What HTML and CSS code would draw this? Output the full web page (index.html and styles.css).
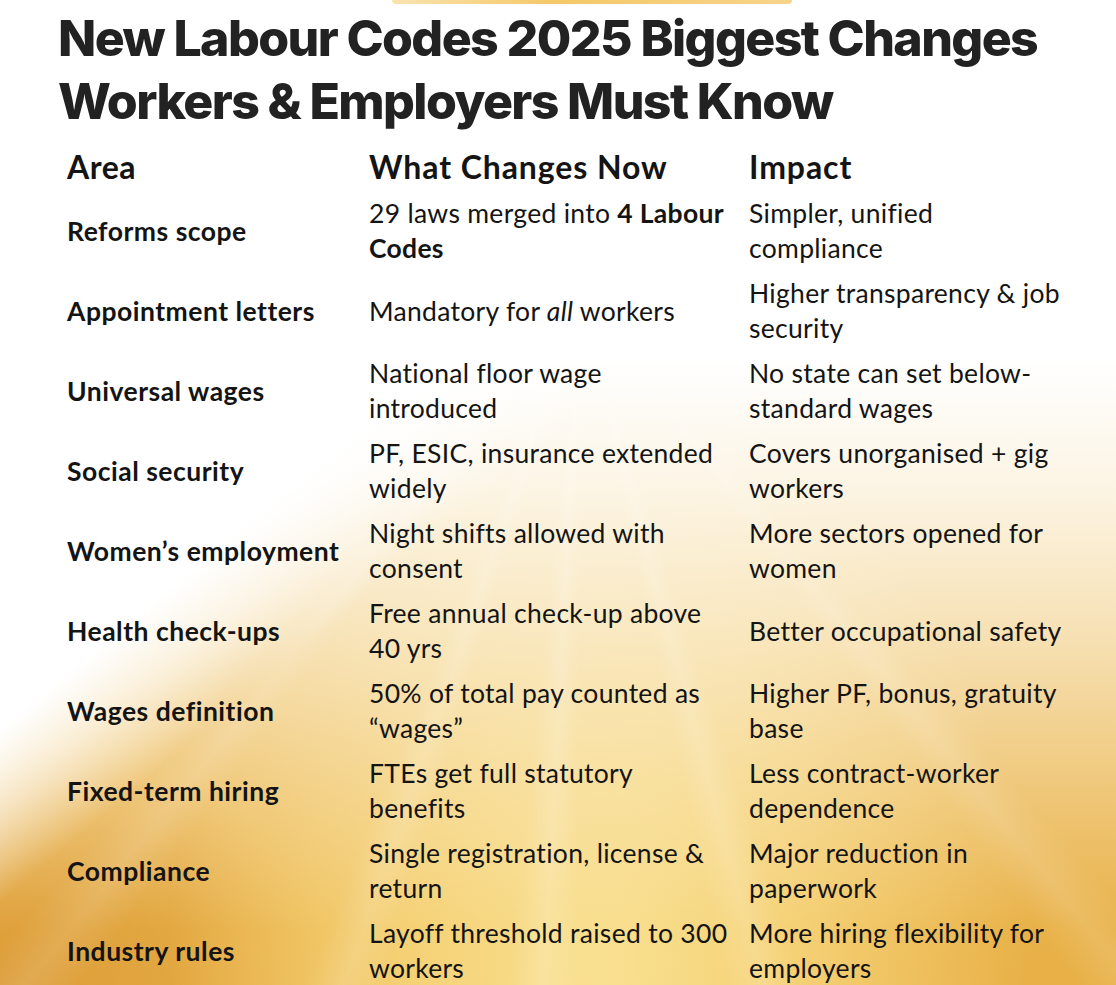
FILE: index.html
```html
<!DOCTYPE html>
<html lang="en">
<head>
<meta charset="utf-8">
<title>New Labour Codes 2025</title>
<link rel="stylesheet" href="styles.css">
</head>
<body>
<div class="page">
  <div class="rays"></div>
  <div class="topbar"></div>
  <h1 class="title">New Labour Codes 2025 Biggest Changes<br>Workers &amp; Employers Must Know</h1>
  <div class="table">
    <div class="row head">
      <div class="c1">Area</div>
      <div class="c2">What Changes Now</div>
      <div class="c3">Impact</div>
    </div>
    <div class="row">
      <div class="c1">Reforms scope</div>
      <div class="c2">29 laws merged into <b>4 Labour</b><br><b>Codes</b></div>
      <div class="c3">Simpler, unified<br>compliance</div>
    </div>
    <div class="row">
      <div class="c1">Appointment letters</div>
      <div class="c2">Mandatory for <i>all</i> workers</div>
      <div class="c3">Higher transparency &amp; job<br>security</div>
    </div>
    <div class="row">
      <div class="c1">Universal wages</div>
      <div class="c2">National floor wage<br>introduced</div>
      <div class="c3">No state can set below-<br>standard wages</div>
    </div>
    <div class="row">
      <div class="c1">Social security</div>
      <div class="c2">PF, ESIC, insurance extended<br>widely</div>
      <div class="c3">Covers unorganised + gig<br>workers</div>
    </div>
    <div class="row">
      <div class="c1">Women’s employment</div>
      <div class="c2">Night shifts allowed with<br>consent</div>
      <div class="c3">More sectors opened for<br>women</div>
    </div>
    <div class="row">
      <div class="c1">Health check-ups</div>
      <div class="c2">Free annual check-up above<br>40 yrs</div>
      <div class="c3">Better occupational safety</div>
    </div>
    <div class="row">
      <div class="c1">Wages definition</div>
      <div class="c2">50% of total pay counted as<br>“wages”</div>
      <div class="c3">Higher PF, bonus, gratuity<br>base</div>
    </div>
    <div class="row">
      <div class="c1">Fixed-term hiring</div>
      <div class="c2">FTEs get full statutory<br>benefits</div>
      <div class="c3">Less contract-worker<br>dependence</div>
    </div>
    <div class="row">
      <div class="c1">Compliance</div>
      <div class="c2">Single registration, license &amp;<br>return</div>
      <div class="c3">Major reduction in<br>paperwork</div>
    </div>
    <div class="row">
      <div class="c1">Industry rules</div>
      <div class="c2">Layoff threshold raised to 300<br>workers</div>
      <div class="c3">More hiring flexibility for<br>employers</div>
    </div>
  </div>
</div>
</body>
</html>
```

FILE: styles.css
```css
html, body {
  margin: 0;
  padding: 0;
}

body {
  width: 1116px;
  height: 985px;
  overflow: hidden;
  color: #141414;
  font-family: Lato, "Open Sans", "Liberation Sans", sans-serif;
  background:
    linear-gradient(140deg, #ffffff 0%, #ffffff 38%, rgba(255,255,255,0.6) 42%, rgba(255,255,255,0) 47%),
    linear-gradient(180deg, #ffffff 0px, #ffffff 360px, rgba(255,255,255,0.85) 480px, rgba(255,255,255,0.6) 620px, rgba(255,255,255,0.25) 790px, rgba(255,255,255,0) 930px),
    radial-gradient(ellipse 430px 560px at 600px 960px, #f9e192 0%, #f5d175 45%, rgba(240,190,80,0) 100%),
    radial-gradient(ellipse 340px 240px at 0px 985px, #dc9c38 0%, rgba(224,160,58,0) 100%),
    linear-gradient(180deg, #f2c862 0%, #e8b047 100%);
}

.page {
  position: relative;
  height: 985px;
  display: flex;
  flex-direction: column;
}

.rays {
  position: absolute;
  inset: 0;
  pointer-events: none;
  background:
    conic-gradient(from 180deg at 580px 300px,
      rgba(255,255,255,0) 0deg,
      rgba(255,255,255,0.18) 3deg,
      rgba(255,255,255,0) 6deg,
      rgba(255,255,255,0) 16deg,
      rgba(255,255,255,0.15) 19deg,
      rgba(255,255,255,0) 22deg,
      rgba(255,255,255,0) 36deg,
      rgba(255,255,255,0.12) 39deg,
      rgba(255,255,255,0) 42deg,
      rgba(255,255,255,0) 318deg,
      rgba(255,255,255,0.12) 321deg,
      rgba(255,255,255,0) 324deg,
      rgba(255,255,255,0) 342deg,
      rgba(255,255,255,0.15) 345deg,
      rgba(255,255,255,0) 348deg,
      rgba(255,255,255,0) 360deg);
}

.topbar {
  position: absolute;
  left: 392px;
  top: 0;
  width: 400px;
  height: 4px;
  border-radius: 0 0 6px 6px;
  background: linear-gradient(90deg, rgba(245,200,100,0.5), #f4c867 40%, #f6d48a 100%);
}

.title {
  position: relative;
  margin: 7px 0 0 58px;
  font-family: Inter, Roboto, "Liberation Sans", sans-serif;
  font-weight: 800;
  font-size: 50px;
  line-height: 63px;
  letter-spacing: -1.6px;
  color: #222222;
}

.table {
  position: relative;
  display: flex;
  flex-direction: column;
  padding-left: 67px;
  margin-top: 8px;
}

.row {
  display: grid;
  grid-template-columns: 302px 380px 1fr;
  align-items: center;
  height: 80px;
  font-size: 26.5px;
  line-height: 35px;
  letter-spacing: 0.3px;
}

.row .c1 {
  font-weight: 700;
  letter-spacing: 0.5px;
}

.row.head {
  height: 50px;
  font-size: 32px;
  font-weight: 700;
  letter-spacing: 0.9px;
}

.c2 b {
  font-weight: 700;
}
```
